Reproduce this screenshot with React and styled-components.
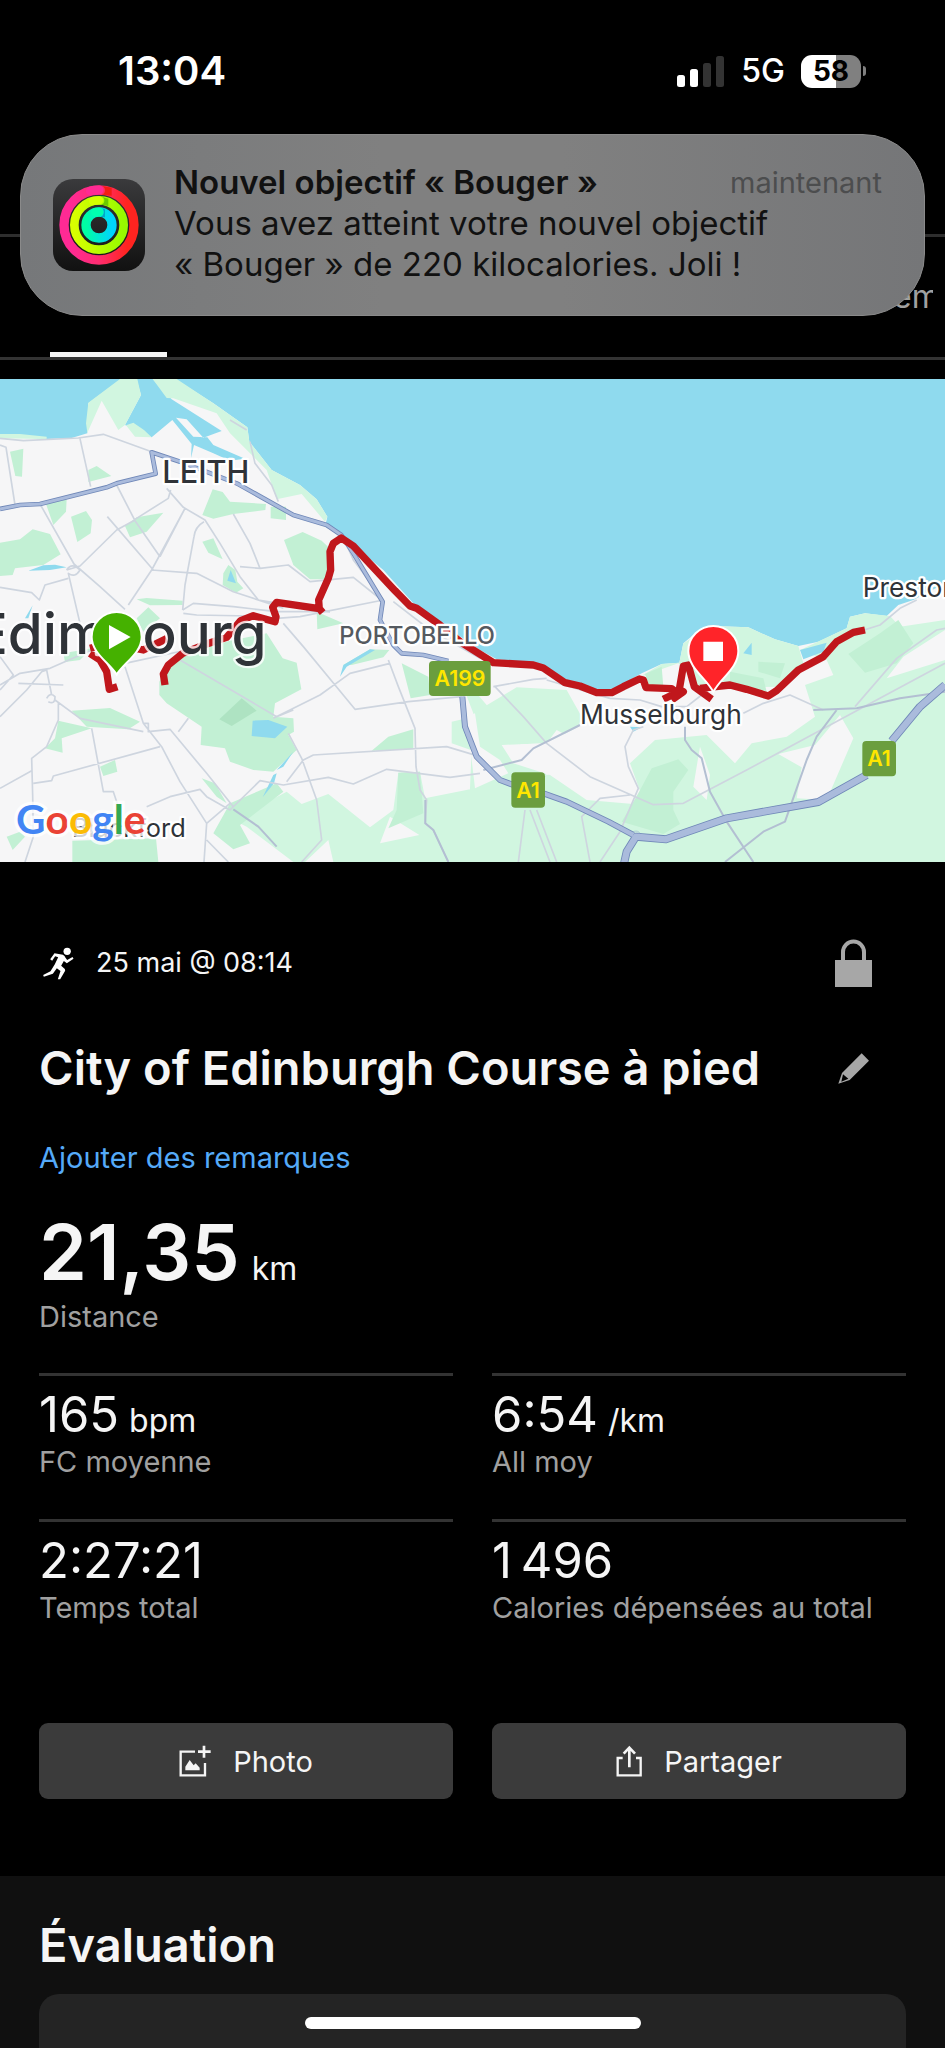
import styled, { createGlobalStyle } from "styled-components";

const stats = [
    { value: "165", unit: "bpm", label: "FC moyenne" },
    { value: "6:54", unit: "/km", label: "All moy" },
    { value: "2:27:21", label: "Temps total" },
    { value: "1\u2009496", label: "Calories dépensées au total" },
]

export default function App() {
    return (<>
        <GlobalStyle />
        <Screen>
            <StatusBar>
                <Clock>13:04</Clock>
                <Signals>
                    <SignalIcon />
                    <Network>5G</Network>
                    <Battery><Level>58</Level></Battery>
                </Signals>
            </StatusBar>
            <TopBar />
            <Tabs>
                <Tab href="#apercu" $active>Aperçu</Tab>
                <NextTab href="#suite">em</NextTab>
            </Tabs>
            <RouteMap />
            <Details>
                <Meta>
                    <RunIcon />
                    <DateText>25 mai @ 08:14</DateText>
                    <IconButton aria-label="Confidentialité"><LockIcon /></IconButton>
                </Meta>
                <TitleRow>
                    <Title>City of Edinburgh Course à pied</Title>
                    <IconButton aria-label="Modifier"><PencilIcon /></IconButton>
                </TitleRow>
                <Remarks href="#remarques">Ajouter des remarques</Remarks>
                <Distance>21,35<Unit>km</Unit></Distance>
                <Label>Distance</Label>
                <Stats>
                    {stats.map((s) => (
                        <Stat key={s.label}>
                            <Value>{s.value}{s.unit && <Unit>{s.unit}</Unit>}</Value>
                            <Label>{s.label}</Label>
                        </Stat>))}
                </Stats>
                <Actions>
                    <Action><PhotoIcon />Photo</Action>
                    <Action><ShareIcon />Partager</Action>
                </Actions>
            </Details>
            <Evaluation>
                <Title as="h2">Évaluation</Title>
                <EvaluationCard />
            </Evaluation>
            <Notification role="status">
                <ActivityIcon />
                <NotificationBody>
                    <NotificationHead>
                        <NotificationTitle>Nouvel objectif « Bouger »</NotificationTitle>
                        <When>maintenant</When>
                    </NotificationHead>
                    <Message>Vous avez atteint votre nouvel objectif<br />« Bouger » de 220 kilocalories. Joli !</Message>
                </NotificationBody>
            </Notification>
            <HomeIndicator />
        </Screen>
    </>)
}

function SignalIcon() {
    return (
        <svg width="48" height="31" viewBox="0 0 48 31" fill="#fff">
            <rect x="0" y="19" width="8" height="12" rx="2.5" />
            <rect x="13" y="13" width="8" height="18" rx="2.5" />
            <rect x="26" y="7" width="8" height="24" rx="2.5" fill="#333" />
            <rect x="39" y="0" width="8" height="31" rx="2.5" fill="#333" />
        </svg>)
}

function ActivityIcon() {
    return (
        <svg width="92" height="92" viewBox="68 60 276 276" fill="none">
            <defs>
                <linearGradient id="tile" x2="0" y2="1"><stop stopColor="#3a3a3c" /><stop offset="1" stopColor="#111" /></linearGradient>
                <linearGradient id="move"><stop offset=".1" stopColor="#ff2a94" /><stop offset=".5" stopColor="#ff2d70" /><stop offset=".9" stopColor="#ff2420" /></linearGradient>
                <linearGradient id="exercise"><stop stopColor="#d8ff00" /><stop offset="1" stopColor="#96fa00" /></linearGradient>
                <linearGradient id="stand"><stop stopColor="#00ffa4" /><stop offset="1" stopColor="#00d4ff" /></linearGradient>
            </defs>
            <rect x="68" y="60" width="276" height="276" rx="60" fill="url(#tile)" />
            <circle cx="206" cy="198" r="105" stroke="url(#move)" strokeWidth="28" />
            <circle cx="206" cy="198" r="74" stroke="url(#exercise)" strokeWidth="26" />
            <circle cx="206" cy="198" r="39" stroke="url(#stand)" strokeWidth="28" />
            <path d="M206 79q18 2 18 14t-10 14l30 3v-24z" fill="#f21d12" />
            <path d="M206 111q16 2 16 13t-10 13l22 4v-22z" fill="#6cc800" />
            <path d="M206 145q14 2 14 14t-10 14l14 2v-24z" fill="#00a8c8" />
            <path d="M180 96q12-3 26-3" stroke="#ff2a94" strokeWidth="27" strokeLinecap="round" />
            <path d="M188 126q8-2 18-2" stroke="#d4ff00" strokeWidth="25" strokeLinecap="round" />
            <path d="M196 160q4-1 10-1" stroke="#00ffb0" strokeWidth="27" strokeLinecap="round" />
        </svg>)
}

function RunIcon() {
    return (
        <svg width="31" height="33" viewBox="25 34 92 99" fill="#fff">
            <circle cx="97" cy="47" r="11" />
            <path d="M59 53L84 57Q90 60 92 66L97 73L113 64L116 69L96 83L87 76L79 90L90 100L91 105L76 131H69L77 106L66 98L54 114L27 123L25 118L47 107L60 86L70 65L61 62L52 75L46 71Z" />
        </svg>)
}

function LockIcon() {
    return (
        <svg width="37" height="48" viewBox="0 0 37 48">
            <path d="M8 24V13a10.500 10.500 0 0 1 21 0v11" fill="none" stroke="#a7a7a7" strokeWidth="4" />
            <path d="M0 21h37v27H0z" fill="#a7a7a7" />
        </svg>)
}

function PencilIcon() {
    return (
        <svg width="31" height="31" viewBox="114 400 93 93" fill="#a7a7a7">
            <path fillRule="evenodd" d="M185 401L207 423L149 481L115 492L126 460ZM129 464L124 486L145 477Z" />
        </svg>)
}

function PhotoIcon() {
    return (
        <svg width="32" height="32" viewBox="36 40 96 96" fill="none" stroke="#f5f5f5" strokeWidth="7">
            <path d="M84 60H41V131H114V94" />
            <path d="M111 42V78M93 60H131" strokeWidth="8" />
            <path d="M55 116V105L68 85L80 101L86 95L98 108V116Z" fill="#f5f5f5" stroke="none" />
        </svg>)
}

function ShareIcon() {
    return (
        <svg width="26" height="32" viewBox="53 40 78 96" fill="none" stroke="#f5f5f5" strokeWidth="7">
            <path d="M73 79H58V131H127V79H113" />
            <path d="M93 107V50M76 66L93 48L110 66" strokeWidth="8" />
        </svg>)
}

function RouteMap() {
    return (
        <Map viewBox="0 27 2835 1449" role="img" aria-label="Parcours">
            <rect y="27" width="2835" height="1449" fill="#8fdaee" />
            {/* land */}
            <path fill="#f6f6f7" d="M0 205L40 200L140 207L215 204L262 190L265 100L360 30L410 30L423 75L375 165L455 202L517 150L575 222L573 265L582 225L640 250L690 272L735 266L640 225L622 202L580 200L528 143L560 148L610 203L665 183L515 88L458 27L530 30L640 100L742 172L748 215L815 300L900 345L950 388L982 440L975 470L1024 495L1150 600L1240 700L1330 765L1440 840L1490 868L1610 878L1705 935L1795 962L1845 955L1925 910L1985 882L2038 878L2050 820L2080 795L2135 768L2245 772L2325 808L2395 828L2455 815L2540 775L2550 740L2595 730L2660 738L2695 705L2740 690L2835 640V1476H0Z" />
            {/* countryside */}
            <g fill="#d1f6e0">
                <path d="M0 192L60 192L140 200V207L0 205ZM262 188L258 160L265 98L360 27L412 27L423 75L375 165L355 180L305 92ZM378 166L400 158L432 180L455 202L405 200ZM458 27L530 27L640 100L742 172L748 215L815 300L900 345L950 388L982 440L975 455L905 372L830 388L800 300L690 190L650 130L520 85L500 84Z" />
                <path d="M700 1350L860 1265L905 1302L985 1272L1110 1372L1180 1320L1195 1208L1260 1205L1275 1285L1425 1255L1440 1150L1355 1120V1055L1400 1045L1470 1476H880L740 1370ZM1420 1030L1550 952L1700 960L1745 1040L1735 1070L1640 1120L1510 1125L1540 1180L1640 1215L1700 1200L1935 1304L1890 1180L1965 1110L2120 1095L2205 1180L2255 1120L2360 1100L2445 1040L2415 945L2500 915L2480 870L2400 840L2540 775L2550 740L2595 730L2670 738L2700 770L2835 750V1476H1400ZM1640 1215L1425 1250L1420 1030L1370 900Z" />
                <path d="M2050 820L2135 768L2245 772L2325 808L2395 828L2410 880L2340 950L2100 955L2035 880L1920 920L1985 882L2038 878Z" />
            </g>
            <g fill="#f6f6f7">
                <path d="M2335 1152L2445 1125L2520 1035L2560 1105L2480 1290L2390 1285L2405 1192ZM1505 1125L1540 1180L1650 1215L1760 1290L1935 1305L1880 1230L1870 1190L1670 1080L1640 1120ZM2100 1130L2080 1250L2120 1290L2130 1215ZM1400 1040L1425 1030L1440 1130L1500 1170L1525 1210L1425 1255ZM1170 1340L1258 1395L1140 1420ZM2660 925L2710 860L2835 780V870ZM985 1410L1000 1476H915Z" />
            </g>
            {/* parks */}
            <g fill="#c2f0d4">
                <path d="M30 245L70 236L66 320L46 318ZM265 300L290 288L334 318L265 336ZM138 402L200 388L198 425L160 465ZM0 518L60 508L98 478L150 492L182 553L130 585L45 595L38 615L0 618ZM213 440L258 423L276 450L272 490L232 516ZM375 468L410 442L490 428L440 485L390 502ZM607 435L638 358L668 366L690 395L798 402L796 420L700 432L640 446ZM812 410H858V450L812 445ZM852 510L908 486L965 512L1000 545L992 615L970 628L930 628L880 585ZM607 515L640 505L668 568L625 548ZM685 585L706 600L712 635L730 655L708 668L668 645L670 610ZM410 688L440 684L548 692V705L450 706ZM950 725L1030 760L952 778ZM190 850L275 835L240 870L195 876ZM410 745L445 712L480 745L430 785ZM215 1022L330 1014L420 1055L385 1078L260 1070ZM175 1052L275 1075L185 1105L188 1148L135 1135L165 1105ZM300 1190L345 1170L352 1205L310 1218ZM605 1225L645 1240L680 1300L650 1280ZM20 1400L60 1385L75 1400L38 1440ZM217 1412L468 1405L475 1476H217ZM640 1390L690 1300L830 1240L850 1265L720 1365L750 1420L700 1438ZM1115 1142L1165 1100L1240 1078V1138ZM1030 885L1110 838L1168 840L1150 862L1055 885ZM1205 880L1285 920L1290 975L1232 985ZM1195 1208L1260 1205L1270 1330L1165 1375L1190 1320Z" />
                <path d="M478 935L510 880L560 845L700 810L800 790L848 865L890 878L904 958L825 1000L820 1040L880 1045L882 1085L865 1095L890 1140L820 1205L760 1200L690 1175L675 1135L602 1125L605 1070L500 1000L478 975Z" />
                <path d="M1955 1195L2035 1168L2065 1200L2020 1265V1320L2040 1362L1990 1392L1865 1355L1915 1270ZM2545 852L2640 790L2695 750L2740 820L2690 880L2595 908ZM2275 875L2355 880L2340 925L2275 905ZM2190 905L2290 925L2300 965L2190 955ZM1935 912L1985 890L1990 950L1945 945Z" />
            </g>
            <path d="M658 1048L725 985L770 1022L695 1068Z" fill="#aee3c2" />
            <g fill="#8fdaee">
                <path d="M758 1052L805 1050L862 1070L825 1105L755 1098ZM85 602L130 586L165 584L200 592L150 600ZM682 632L692 600L708 640ZM1020 920L1030 885L1110 838L1125 840L1040 890ZM788 1282L820 1215L830 1210L822 1240ZM830 1200L880 1145L850 1190ZM75 745L98 706L85 745ZM2230 850L2255 818V855ZM2400 840L2480 818L2470 845L2410 868ZM1890 1070L1925 1072L1900 1085Z" />
            </g>
            {/* streets */}
            <g fill="none" stroke="#ced5df" strokeWidth="5" strokeLinejoin="round">
                <path d="M0 205L70 212L235 204L310 193L455 245M0 225L18 232L45 405M240 206L272 350M120 402L222 582L300 650L375 718M350 345L405 452L480 560M322 440L460 600M405 448L505 385L512 360M555 415L455 600L385 705M555 415L480 560M500 355L550 412L615 450L660 520L720 620L775 690L990 725M612 455Q585 470 582 500L555 645L548 720M200 600L240 588L350 480L405 450M200 600Q215 575 240 600Q225 625 205 610L240 760M0 652L95 668L118 690L135 645L205 625M455 600L590 610L700 665L850 715M720 590L780 595L865 585L930 635L1060 622L1145 690M700 432L750 520L780 595M750 215L765 280L815 345L835 395M690 150L740 180" />
                <path d="M0 945L60 910L150 895L275 840M0 860L40 915L0 960M55 940L190 945M0 1040L80 960L125 905L140 900L155 975M140 985Q150 965 165 980Q165 1005 145 995M165 990L240 1045L430 1085M175 1000V1050L140 1130L95 1165L98 1275L100 1400L75 1476M100 1240L155 1232L160 1218L480 1130M0 1255L95 1202M375 890L430 1060L485 1130L540 1235L620 1360L612 1476M430 1060H445V1085L510 1078L620 1210L700 1310M550 730L590 735L750 738L830 745L900 740L1150 690M548 720L580 700L700 710L830 725L990 725M375 880L560 840M275 1075L310 1265H340L355 1310M440 1310L510 1280L600 1258L620 1280L690 1320L780 1232L850 1245L985 1222L1060 1242L1160 1198L1350 1222L1440 1210M850 760L910 830L1065 1018L1225 995L1385 980M620 1360L690 1300M620 1410L685 1476M565 1045L535 1085M1165 870L1195 950L1245 1075L1248 1190L1260 1260L1280 1290L1275 1360L1300 1380L1345 1476M865 1090L905 1165L950 1290L965 1410L905 1476M860 1235L910 1170L940 1155L1340 1130L1440 1160M820 1045L960 975L1050 910L1170 880M540 870L830 1040L880 1020M1180 695L1290 780L1440 865M1040 525L1060 570L1150 690" />
                <path d="M1480 950L1600 928L1640 925M1485 950L1570 1040L1640 1120L1770 1220L1960 1304L2050 1300L2240 1200L2500 1060L2835 880M1830 985L1920 990L1985 1010L2060 1010L2105 975M1640 930L1830 985M1930 1070L1900 1080L1875 1130L1885 1190L1915 1255L1860 1385L1800 1476M2230 1030L2290 1000L2370 975L2470 1020M2565 1010L2690 865L2810 780L2835 775M2560 790L2640 765L2700 715L2750 690M1575 1320L1555 1476M1590 1320L1650 1476M1610 1320L1670 1476M1770 1476L1745 1340L1800 1285L1890 1275" />
                <path d="M2055 1070V1110L2075 1140L2105 1165L2130 1265L2180 1355L2260 1476M2440 1020L2570 1015L2700 985L2835 965M2175 1476L2290 1385L2355 1355L2420 1170L2450 1100L2510 1020M1450 1200L1565 1170L1600 1135L1740 1065M700 1318L775 1370L830 1430M1276 1290V1360L1300 1380L1345 1476" stroke="#b3bfd2" strokeWidth="6" />
            </g>
            {/* trunk roads, drawn twice for the casing */}
            {[{ c: "#7088b8", d: 0 }, { c: "#aabbdc", d: 5 }].map((road) => (
                <g key={road.c} fill="none" stroke={road.c} strokeLinejoin="round">
                    <path strokeWidth={14 - road.d} d="M0 417L60 405L120 402L320 352L350 340L467 311L455 247L540 275L710 340L880 435L980 465L1024 495L1060 550L1148 695L1140 750L1180 825L1205 850L1270 855L1345 873" />
                    <path strokeWidth={18 - road.d} d="M1387 980L1395 1070L1430 1160L1500 1230L1540 1245M1630 1270L1700 1295L1825 1355L1900 1395" />
                    <path strokeWidth={24 - road.d} d="M1870 1490L1880 1445L1908 1400L1998 1408L2180 1345L2455 1296L2600 1215M2675 1113L2760 1010L2835 945" />
                    <circle cx="1908" cy="1397" r={14 - road.d / 2} />
                </g>))}
            {/* recorded run */}
            <g fill="none" stroke="#c0171c" strokeWidth="22" strokeLinejoin="round">
                <path d="M352 950L328 958L320 905L300 870L270 850M270 835L330 820L430 840L500 806M495 945L490 912L505 885L548 850L620 822L680 802L722 752L760 737L825 755L828 740L818 712L830 697L958 716L968 728M958 720L956 690L985 625L992 600L990 545L1000 520L1024 504L1060 528L1185 662L1230 708L1250 715L1320 765L1380 815L1480 878L1600 885L1630 894L1695 938L1740 948L1790 968L1835 968L1870 950L1918 927L1930 930L1938 953L2015 956L2030 968L1990 988M2015 990L2050 965L2038 958L2050 888L2065 885L2083 950L2135 988M2100 955L2190 945L2240 958L2305 978L2330 962L2395 900L2470 860L2510 815L2560 787L2595 780" />
            </g>
            <g fontFamily="Inter, sans-serif" fill="#2f3338" stroke="#fff" strokeWidth="14" strokeLinejoin="round" paintOrder="stroke">
                <text x="487" y="339" fontSize="92" fontWeight="500">LEITH</text>
                <text x="1018" y="821" fontSize="71" fontWeight="500" fill="#555a60">PORTOBELLO</text>
                <text x="800" y="853" fontSize="170" fontWeight="500" textAnchor="end" strokeOpacity=".8">Edimbourg</text>
                <text x="1740" y="1062" fontSize="79">Musselburgh</text>
                <text x="2588" y="680" fontSize="79">Preston</text>
                <text x="557" y="1400" fontSize="76" textAnchor="end">Blackford</text>
            </g>
            <text x="48" y="1392" fontSize="122" fontFamily="Lato, sans-serif" fontWeight="700" fill="#4285f4" stroke="#fff" strokeOpacity=".8" strokeWidth="20" paintOrder="stroke">G<tspan fill="#ea4335">o</tspan><tspan fill="#fbbc05">o</tspan>g<tspan fill="#34a853">l</tspan><tspan fill="#ea4335">e</tspan></text>
            <g fill="#6b9e3e">
                <rect x="1287" y="873" width="185" height="105" rx="12" />
                <rect x="1534" y="1207" width="101" height="106" rx="12" />
                <rect x="2587" y="1113" width="101" height="106" rx="12" />
            </g>
            <g fontFamily="Inter, sans-serif" fontSize="64" fontWeight="600" fill="#ffe600" textAnchor="middle">
                <text x="1380" y="949">A199</text>
                <text x="1584" y="1283">A1</text>
                <text x="2637" y="1189">A1</text>
            </g>
            <g stroke="#fff" strokeWidth="6">
                <path d="M350 914C330 880 275 850 275 801A75 75 0 0 1 425 801C425 850 370 880 350 914Z" fill="#45b100" />
                <path d="M2140 966C2120 925 2065 895 2065 843A75 75 0 0 1 2215 843C2215 895 2160 925 2140 966Z" fill="#ff2429" />
            </g>
            <path d="M327 765L392 801L327 838ZM2110 815H2169V873H2110Z" fill="#fff" />
        </Map>)
}

const GlobalStyle = createGlobalStyle`
* { box-sizing: border-box; }
body {
    margin: 0;
    background: #000;
    color: #f5f5f5;
    font-family: Inter, "Liberation Sans", sans-serif;
}
svg { display: block; flex-shrink: 0; }`

const Screen = styled.main`
position: relative;
display: flex;
flex-direction: column;
min-height: 100vh;
overflow: hidden;`

const StatusBar = styled.header`
display: flex;
justify-content: space-between;
align-items: center;
padding: 47px 79px 0 118px;`

const Clock = styled.time`
font-size: 40px;
line-height: 48px;
font-weight: 600;
color: #fff;`

const Signals = styled.div`
display: flex;
align-items: center;
gap: 16px;
color: #fff;`

const Network = styled.span`
font-size: 32px;
line-height: 40px;
font-weight: 500;`

const Battery = styled.div`
display: flex;
align-items: center;
gap: 2px;
&::after {
    content: "";
    width: 3px;
    height: 10px;
    border-radius: 0 5px 5px 0;
    background: #808080;
}`

const Level = styled.span`
width: 60px;
border-radius: 11px;
background: linear-gradient(to right, #fff 58%, #808080 58%);
color: #000;
font-size: 28px;
line-height: 33px;
font-weight: 700;
text-align: center;`

const TopBar = styled.div`
height: 142px;
border-bottom: 3px solid #2e2e2e;`

const Tabs = styled.nav`
display: flex;
justify-content: space-between;
height: 123px;
padding: 0 12px 0 50px;
border-bottom: 3px solid #333;`

const Tab = styled.a`
padding: 40px 4px;
white-space: nowrap;
font-size: 32px;
line-height: 40px;
text-decoration: none;
color: ${props => props.$active ? "#f5f5f5" : "#a0a0a0"};
border-bottom: ${props => props.$active ? "5px solid #f5f5f5" : "none"};`

/* runs off the side of the strip */
const NextTab = styled(Tab)`
width: 40px;
padding: 40px 0;
overflow: hidden;`

const Map = styled.svg`
width: 100%;
height: auto;
margin-top: 19px;`

const Details = styled.section`
padding: 77px 39px;`

const Meta = styled.div`
display: flex;
align-items: center;
gap: 22px;
padding: 0 34px 0 4px;`

const DateText = styled.time`
flex: 1;
font-size: 27px;
line-height: 40px;`

const IconButton = styled.button`
display: flex;
justify-content: center;
width: 37px;
padding: 0;
border: 0;
background: none;`

const TitleRow = styled.div`
display: flex;
justify-content: space-between;
align-items: center;
margin: 51px 0 40px;
padding-right: 34px;`

const Title = styled.h1`
margin: 0;
font-size: 47px;
line-height: 60px;
font-weight: 600;
white-space: nowrap;`

const Remarks = styled.a`
display: block;
font-size: 29px;
line-height: 40px;
color: #55aaf8;
text-decoration: none;`

const Distance = styled.p`
display: flex;
align-items: baseline;
gap: 12px;
margin: 34px 0 5px;
font-size: 77px;
line-height: 80px;
font-weight: 600;`

const Unit = styled.span`
font-size: 32px;
line-height: 32px;
font-weight: 400;`

const Label = styled.p`
margin: 0;
font-size: 29px;
line-height: 40px;
color: #a0a0a0;`

const Stats = styled.div`
display: grid;
grid-template-columns: 1fr 1fr;
gap: 37px 39px;
margin-top: 36px;`

const Stat = styled.div`
padding-top: 12px;
border-top: 3px solid #333;`

const Value = styled.p`
display: flex;
align-items: baseline;
gap: 10px;
margin: 0;
font-size: 49px;
line-height: 54px;`

const Actions = styled.div`
display: grid;
grid-template-columns: 1fr 1fr;
gap: 39px;
margin-top: 95px;`

const Action = styled.button`
display: flex;
justify-content: center;
align-items: center;
gap: 22px;
height: 76px;
border: 0;
border-radius: 9px;
background: #3b3b3b;
color: #f5f5f5;
font-family: inherit;
font-size: 29px;`

const Evaluation = styled.section`
display: flex;
flex-direction: column;
flex: 1;
padding: 39px 39px 0;
background: #101010;`

const EvaluationCard = styled.div`
flex: 1;
min-height: 54px;
margin-top: 19px;
border-radius: 20px 20px 0 0;
background: #242424;`

const Notification = styled.aside`
position: absolute;
top: 134px;
left: 20px;
right: 20px;
display: flex;
align-items: center;
gap: 29px;
height: 182px;
padding: 0 42px 0 32px;
border-radius: 62px;
border: 1px solid #8a8a8a;
background: linear-gradient(to right, #76787a, #808080 40%, #808080 60%, #757678);
color: #111;
font-size: 33px;
line-height: 41px;`

const NotificationBody = styled.div`
flex: 1;
padding-bottom: 4px;
white-space: nowrap;`

const NotificationHead = styled.div`
display: flex;
justify-content: space-between;`

const NotificationTitle = styled.strong`
font-weight: 600;`

const When = styled.span`
font-size: 29px;
color: #4c4d4e;`

const Message = styled.p`
margin: 0;`

const HomeIndicator = styled.div`
position: absolute;
bottom: 19px;
left: 50%;
width: 336px;
height: 12px;
border-radius: 6px;
background: #fff;
transform: translateX(-50%);`
